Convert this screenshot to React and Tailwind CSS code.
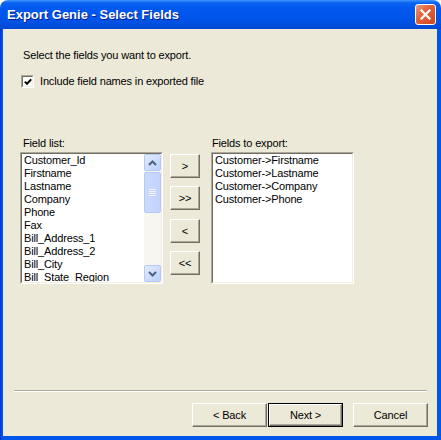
import React from "react";

const fields = [
  "Customer_Id",
  "Firstname",
  "Lastname",
  "Company",
  "Phone",
  "Fax",
  "Bill_Address_1",
  "Bill_Address_2",
  "Bill_City",
  "Bill_State_Region",
];

const exported = [
  "Customer->Firstname",
  "Customer->Lastname",
  "Customer->Company",
  "Customer->Phone",
];

function Sunken({ className = "", children }) {
  return (
    <div className={"border border-t-[#ACA899] border-l-[#ACA899] border-b-white border-r-white " + className}>
      <div className="w-full h-full border border-t-[#716F64] border-l-[#716F64] border-b-[#F1EFE2] border-r-[#F1EFE2] bg-white overflow-hidden">
        {children}
      </div>
    </div>
  );
}

function ClassicButton({ children, className = "", def = false }) {
  if (def) {
    return (
      <div className={"border border-black " + className}>
        <div className="w-full h-full bg-[#ECE9D8] border border-t-white border-l-white border-b-[#716F64] border-r-[#716F64] shadow-[inset_-1px_-1px_0_#ACA899] flex items-center justify-center text-[11px] leading-none">
          {children}
        </div>
      </div>
    );
  }
  return (
    <div className={"bg-[#ECE9D8] border border-t-white border-l-white border-b-[#716F64] border-r-[#716F64] shadow-[inset_-1px_-1px_0_#ACA899] flex items-center justify-center text-[11px] leading-none " + className}>
      {children}
    </div>
  );
}

function ScrollBtn({ up }) {
  return (
    <div className="w-[17px] h-[17px] rounded-[2px] border border-[#B5C9F4] bg-gradient-to-br from-[#E3ECFF] to-[#BCD0FA] flex items-center justify-center">
      <svg width="9" height="6" viewBox="0 0 9 6">
        {up ? (
          <path d="M1 5 L4.5 1.5 L8 5" fill="none" stroke="#4D6185" strokeWidth="2" />
        ) : (
          <path d="M1 1 L4.5 4.5 L8 1" fill="none" stroke="#4D6185" strokeWidth="2" />
        )}
      </svg>
    </div>
  );
}

export default function App() {
  return (
    <div className="w-[441px] h-[440px] flex flex-col bg-white font-['Liberation_Sans',Arial,sans-serif] text-black select-none">
      {/* Title bar */}
      <div className="h-[29px] shrink-0 rounded-t-[8px] bg-[linear-gradient(to_bottom,#3F95FF_0%,#0A63F2_10%,#0058EE_30%,#0055EA_60%,#004FDF_85%,#0046CF_100%)] flex items-center pl-[7px] pr-[5px]">
        <div className="flex-1 text-white font-bold text-[13px] [text-shadow:1px_1px_0_#0A1E8A]">
          Export Genie - Select Fields
        </div>
        <div className="w-[21px] h-[21px] rounded-[3px] border border-white bg-[linear-gradient(135deg,#EE9A7C_0%,#E0643E_40%,#CC4620_100%)] flex items-center justify-center">
          <svg width="11" height="11" viewBox="0 0 11 11">
            <path d="M1.5 1.5 L9.5 9.5 M9.5 1.5 L1.5 9.5" stroke="white" strokeWidth="2.2" strokeLinecap="square" />
          </svg>
        </div>
      </div>

      {/* Frame */}
      <div className="flex-1 flex pl-[3px] pr-[4px] pb-[4px] bg-[linear-gradient(to_right,#0032C8_0px,#0055EA_2px,#0055EA_100%)]">
        <div className="flex-1 bg-[#ECE9D8] flex flex-col text-[11px] leading-[13px] tracking-[-0.15px]">
          <div className="mt-[20px] pl-[20px] h-[13px]">Select the fields you want to export.</div>

          <div className="mt-[13px] pl-[18px] h-[13px] flex items-center">
            <div className="w-[13px] h-[13px] border border-t-[#ACA899] border-l-[#ACA899] border-b-white border-r-white">
              <div className="w-full h-full bg-white border border-t-[#716F64] border-l-[#716F64] border-b-[#F1EFE2] border-r-[#F1EFE2] flex items-center justify-center">
                <svg width="8" height="8" viewBox="0 0 8 8">
                  <path d="M0.8 3.6 L3 5.8 L7.2 1.4" fill="none" stroke="black" strokeWidth="2" />
                </svg>
              </div>
            </div>
            <span className="ml-[6px]">Include field names in exported file</span>
          </div>

          <div className="mt-[49px] h-[13px] flex">
            <div className="pl-[20px] w-[208px]">Field list:</div>
            <div className="pl-[1px]">Fields to export:</div>
          </div>

          <div className="mt-[2px] flex pl-[17px]">
            <Sunken className="w-[143px] h-[132px]">
              <div className="flex h-full">
                <div className="flex-1 pl-[2px]">
                  {fields.map((f) => (
                    <div key={f} className="h-[13px] leading-[13px] whitespace-nowrap">{f}</div>
                  ))}
                </div>
                <div className="w-[17px] h-full bg-[#F7F6F1] flex flex-col">
                  <ScrollBtn up />
                  <div className="mt-[1px] w-[17px] h-[41px] rounded-[2px] border border-[#B5C9F4] bg-gradient-to-r from-[#CADAFC] to-[#C2D3FB] flex flex-col items-center justify-center gap-[1px]">
                    <div className="w-[7px] h-[1px] bg-[#EEF3FF]" />
                    <div className="w-[7px] h-[1px] bg-[#EEF3FF]" />
                    <div className="w-[7px] h-[1px] bg-[#EEF3FF]" />
                    <div className="w-[7px] h-[1px] bg-[#EEF3FF]" />
                  </div>
                  <div className="flex-1" />
                  <ScrollBtn />
                </div>
              </div>
            </Sunken>

            <div className="ml-[7px] w-[30px] flex flex-col pt-[2px]">
              <ClassicButton className="h-[24px]">&gt;</ClassicButton>
              <ClassicButton className="h-[24px] mt-[8px]">&gt;&gt;</ClassicButton>
              <ClassicButton className="h-[24px] mt-[9px]">&lt;</ClassicButton>
              <ClassicButton className="h-[24px] mt-[8px]">&lt;&lt;</ClassicButton>
            </div>

            <Sunken className="ml-[11px] w-[143px] h-[132px]">
              <div className="pl-[2px]">
                {exported.map((f) => (
                  <div key={f} className="h-[13px] leading-[13px] whitespace-nowrap">{f}</div>
                ))}
              </div>
            </Sunken>
          </div>

          <div className="mt-[106px] ml-[11px] mr-[10px] h-[2px] border-t border-t-[#ACA899] border-b border-b-white" />

          <div className="mt-[11px] flex justify-end pr-[9px]">
            <ClassicButton className="w-[75px] h-[24px]">&lt; Back</ClassicButton>
            <ClassicButton def className="w-[75px] h-[24px] ml-[1px]">Next &gt;</ClassicButton>
            <ClassicButton className="w-[75px] h-[24px] ml-[10px]">Cancel</ClassicButton>
          </div>
        </div>
      </div>
    </div>
  );
}
